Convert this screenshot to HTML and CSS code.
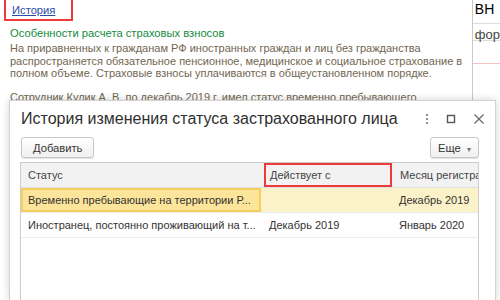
FILE: index.html
```html
<!DOCTYPE html>
<html lang="ru">
<head>
    <meta charset="UTF-8">
    <title>История изменения статуса застрахованного лица</title>
    <link rel="stylesheet" href="styles.css">
</head>
<body>
    <div class="page">
        <div class="main">
            <div class="hist-box">
                <a href="#" class="hist-link">История</a>
            </div>
            <div class="note-title">Особенности расчета страховых взносов</div>
            <p class="note">На приравненных к гражданам РФ иностранных граждан и лиц без гражданства<br>распространяется обязательное пенсионное, медицинское и социальное страхование в<br>полном объеме. Страховые взносы уплачиваются в общеустановленном порядке.</p>
            <p class="note">Сотрудник Кулик А. В. по декабрь 2019 г. имел статус временно пребывающего</p>
        </div>
        <div class="side">
            <div class="side-head">ВН</div>
            <div class="side-field">фор</div>
            <div class="side-line"></div>
        </div>
    </div>

    <div class="dialog">
        <div class="dlg-head">
            <div class="dlg-title">История изменения статуса застрахованного лица</div>
            <div class="dlg-icons">
                <svg width="4" height="12" viewBox="0 0 4 12"><circle cx="2" cy="2" r="1.1" fill="#777"/><circle cx="2" cy="6" r="1.1" fill="#777"/><circle cx="2" cy="10" r="1.1" fill="#777"/></svg>
                <svg width="10" height="10" viewBox="0 0 10 10"><rect x="1.5" y="1.5" width="7" height="7" fill="none" stroke="#555" stroke-width="1.4"/></svg>
                <svg width="12" height="12" viewBox="0 0 12 12"><path d="M1.5 1.5 L10.5 10.5 M10.5 1.5 L1.5 10.5" stroke="#666" stroke-width="1.2"/></svg>
            </div>
        </div>
        <div class="toolbar">
            <button class="btn">Добавить</button>
            <button class="btn btn-more">Еще <span class="caret">▾</span></button>
        </div>
        <div class="grid">
            <div class="row head">
                <div class="cell c1">Статус</div>
                <div class="cell c2 marked">Действует с</div>
                <div class="cell c3">Месяц регистра</div>
            </div>
            <div class="row current">
                <div class="cell c1 focus">Временно пребывающие на территории Р...</div>
                <div class="cell c2"></div>
                <div class="cell c3">Декабрь 2019</div>
            </div>
            <div class="row">
                <div class="cell c1">Иностранец, постоянно проживающий на т...</div>
                <div class="cell c2">Декабрь 2019</div>
                <div class="cell c3">Январь 2020</div>
            </div>
        </div>
    </div>
</body>
</html>
```

FILE: styles.css
```css
body {
    margin: 0;
    font-family: "Liberation Sans", Arial, sans-serif;
    background-color: white;
    overflow: hidden;
    height: 300px;
}
.page {
    display: flex;
    height: 300px;
}
.main {
    width: 484px;
    padding-left: 10px;
    box-sizing: border-box;
}
.hist-box {
    margin-left: -6px;
    width: 59px;
    height: 19px;
    border: 2px solid #f03a3a;
    border-top: none;
    padding-left: 6px;
    font-size: 11.2px;
    line-height: 21px;
}
.hist-link {
    color: #2b4da8;
}
.note-title {
    margin-top: 5px;
    color: #138a40;
    font-size: 11.2px;
    line-height: 14px;
}
.note {
    margin: 2px 0 11px;
    color: #716651;
    font-size: 11px;
    line-height: 12.5px;
    white-space: nowrap;
}
.side {
    flex: 1;
    border-left: 1px solid #c9c9c9;
}
.side-head {
    padding: 1px 0 0 2px;
    font-size: 14px;
    height: 22px;
    border-bottom: 1px solid #ddd;
}
.side-field {
    padding: 3px 0 0 2px;
    height: 13px;
    font-size: 13px;
    color: #444;
    border-bottom: 1px solid #ddd;
}
.side-line {
    margin-top: 22px;
    border-top: 1px solid #f4c4c4;
}
.dialog {
    position: absolute;
    left: 9px;
    top: 100px;
    width: 487px;
    height: 200px;
    box-sizing: border-box;
    background-color: white;
    border: 1px solid #d2d2d2;
    border-bottom: none;
    box-shadow: 0 0 8px rgba(0,0,0,0.18);
    padding: 0 16px 0 10px;
    overflow: hidden;
}
.dlg-head {
    display: flex;
    align-items: center;
    justify-content: space-between;
    height: 36px;
    padding-left: 1px;
}
.dlg-title {
    font-size: 16px;
    color: #2f2f2f;
}
.dlg-icons {
    display: flex;
    align-items: center;
    gap: 17px;
    margin-right: -6px;
}
.toolbar {
    display: flex;
    justify-content: space-between;
    padding-left: 1px;
}
.btn {
    font-family: inherit;
    font-size: 11.2px;
    color: #333;
    height: 21px;
    padding: 0 11px;
    background: linear-gradient(#ffffff, #f0f0f0);
    border: 1px solid #c8c8c8;
    border-radius: 3px;
    box-shadow: 0 1px 1px rgba(0,0,0,0.12);
}
.btn-more {
    width: 49px;
    padding: 0 0 0 7px;
    text-align: left;
}
.caret {
    font-size: 8px;
    color: #777;
    margin-left: 3px;
}
.grid {
    margin-top: 4px;
    border: 1px solid #cdcdcd;
    height: 200px;
}
.row {
    display: flex;
    height: 24px;
    border-bottom: 1px solid #ececec;
    font-size: 11px;
    color: #333;
}
.row.head {
    background-color: #f2f2f2;
    border-bottom: 1px solid #e0e0e0;
    color: #444;
}
.row.current {
    background-color: #fbf2c9;
}
.cell {
    box-sizing: border-box;
    padding-left: 7px;
    line-height: 24px;
    white-space: nowrap;
    overflow: hidden;
}
.c1 { width: 240px; }
.c2 { width: 133px; padding-left: 8px; }
.c3 { flex: 1; padding-left: 5px; }
.focus {
    background-color: #fce59a;
    border: 2px solid #f4cf5e;
    padding-left: 5px;
    line-height: 20px;
}
.marked {
    border: 2px solid #ee3a3a;
    margin: 0 3px 0 3px;
    width: 128px;
    padding-left: 4px;
    line-height: 20px;
}
```
